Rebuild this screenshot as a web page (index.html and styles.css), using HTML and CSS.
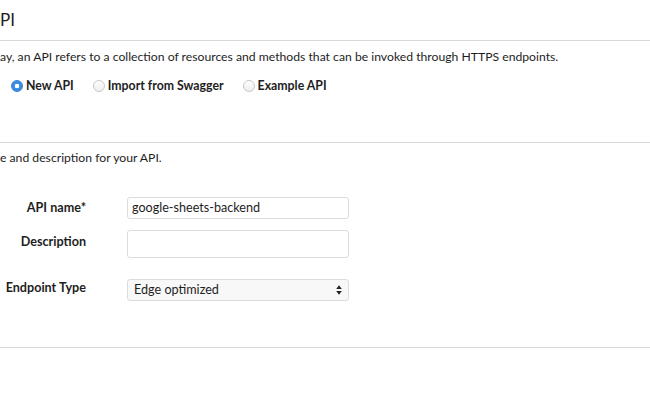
FILE: index.html
```html
<!DOCTYPE html>
<html>
<head>
<meta charset="utf-8">
<link rel="stylesheet" href="styles.css">
</head>
<body>
<div class="page">
  <header class="head">
    <h1 class="title">PI</h1>
  </header>
  <section class="sec sec-type">
    <p class="lead">ay, an API refers to a collection of resources and methods that can be invoked through HTTPS endpoints.</p>
    <div class="radios">
      <label class="radio"><span class="dot on"></span><span class="rlabel">New API</span></label>
      <label class="radio"><span class="dot"></span><span class="rlabel">Import from Swagger</span></label>
      <label class="radio"><span class="dot"></span><span class="rlabel">Example API</span></label>
    </div>
  </section>
  <section class="sec sec-form">
    <p class="lead lead2">e and description for your API.</p>
    <div class="form">
      <div class="label l1">API name*</div>
      <div class="field f1">google-sheets-backend</div>
      <div class="label l2">Description</div>
      <div class="field f2"></div>
      <div class="label l3">Endpoint Type</div>
      <div class="field select">
        <span>Edge optimized</span>
        <svg class="arrows" width="6" height="10" viewBox="0 0 6 10"><path d="M3 0.3 L5.8 4 H0.2 Z M3 9.7 L5.8 6 H0.2 Z" fill="#222"/></svg>
      </div>
    </div>
  </section>
</div>
</body>
</html>
```

FILE: styles.css
```css
html, body {
  margin: 0;
  padding: 0;
  background: #fff;
}
body {
  font-family: Lato, "Open Sans", sans-serif;
  font-size: 12.6px;
  color: #1e1e1e;
  width: 650px;
  height: 400px;
  overflow: hidden;
}
.page {
  width: 650px;
}
.head {
  height: 40px;
  border-bottom: 1px solid #d8d8d8;
}
.title {
  margin: 0;
  padding-top: 10px;
  font-size: 17px;
  font-weight: 400;
  line-height: 20px;
  color: #1e1e1e;
}
.sec {
  border-bottom: 1px solid #d8d8d8;
}
.sec-type {
  height: 101px;
}
.lead {
  margin: 0;
  padding-top: 8px;
  line-height: 16px;
  font-size: 12.2px;
}
.lead2 {
  padding-top: 7px;
}
.radios {
  display: flex;
  margin-top: 13px;
  padding-left: 11px;
  font-weight: 700;
  font-size: 12.3px;
  line-height: 16px;
}
.radio {
  display: flex;
  align-items: center;
  margin-right: 19px;
}
.dot {
  width: 10px;
  height: 10px;
  border-radius: 50%;
  border: 1px solid #c8c8c8;
  background: linear-gradient(#fff, #eeeeee);
  margin-right: 3px;
  box-sizing: content-box;
}
.dot.on {
  border-color: #3a82d8;
  background: radial-gradient(circle, #fff 0 2px, #3d8be0 2.6px);
}
.sec-form {
  height: 204px;
}
.form {
  display: grid;
  grid-template-columns: 86px 222px;
  column-gap: 41px;
  margin-top: 31px;
  align-items: start;
}
.label {
  text-align: right;
  font-weight: 700;
  line-height: 16px;
}
.l1 { margin-top: 3px; }
.l2 { margin-top: 15px; }
.l3 { margin-top: 22px; }
.field {
  box-sizing: border-box;
  border: 1px solid #dcdcdc;
  border-radius: 3px;
  background: #fff;
  padding: 0 4px;
  line-height: 20px;
  height: 22px;
}
.f2 {
  height: 28px;
  margin-top: 11px;
}
.select {
  margin-top: 21px;
  display: flex;
  justify-content: space-between;
  align-items: center;
  background: #f8f8f8;
  padding: 0 6px 0 6px;
}
.arrows { display: block; }
```
